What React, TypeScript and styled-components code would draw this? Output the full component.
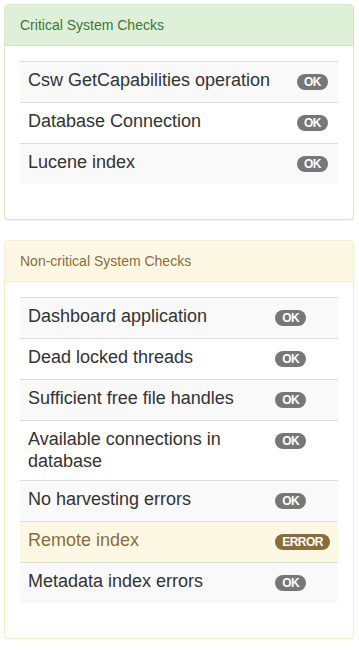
import React from "react";
import styled, { createGlobalStyle, css } from "styled-components";

const GlobalStyle = createGlobalStyle`
  html, body {
    margin: 0;
    padding: 0;
    background: #ffffff;
    font-family: "Liberation Sans", Arial, Helvetica, sans-serif;
    font-size: 14px;
    line-height: 20px;
    color: #333333;
  }
  * { box-sizing: border-box; }
`;

type Variant = "success" | "warning";

const variants = {
  success: { border: "#d6e9c6", bg: "#dff0d8", text: "#3c763d" },
  warning: { border: "#faebcc", bg: "#fcf8e3", text: "#8a6d3b" },
};

const Page = styled.div`
  padding: 4px 5px 0 4px;
  display: flex;
  flex-direction: column;
  gap: 20px;
`;

const Panel = styled.section<{ $variant: Variant }>`
  background: #ffffff;
  border: 1px solid ${(p) => variants[p.$variant].border};
  border-radius: 4px;
  box-shadow: 0 1px 1px rgba(0, 0, 0, 0.05);
`;

const PanelHeading = styled.div<{ $variant: Variant }>`
  padding: 10px 15px;
  background: ${(p) => variants[p.$variant].bg};
  color: ${(p) => variants[p.$variant].text};
  border-bottom: 1px solid ${(p) => variants[p.$variant].border};
  border-radius: 3px 3px 0 0;
  font-size: 14px;
  line-height: 20px;
`;

const PanelBody = styled.div`
  padding: 15px;
`;

const ChecksTable = styled.table`
  width: 100%;
  border-collapse: collapse;
  border-spacing: 0;
  margin-bottom: 20px;
`;

const Row = styled.tr<{ $error?: boolean }>`
  background: #ffffff;
  &:nth-of-type(odd) {
    background: #f9f9f9;
  }
  ${(p) =>
    p.$error &&
    css`
      &&& {
        background: #fcf8e3;
      }
      color: #8a6d3b;
    `}
`;

const NameCell = styled.td`
  padding: 8px;
  border-top: 1px solid #dddddd;
  vertical-align: top;
  font-size: 18px;
  line-height: 21.6px;
`;

const StatusCell = styled.td`
  padding: 8px;
  border-top: 1px solid #dddddd;
  vertical-align: top;
  font-size: 14px;
  line-height: 24px;
  white-space: nowrap;
`;

const Badge = styled.span<{ $error?: boolean }>`
  display: inline-block;
  vertical-align: top;
  margin-top: 4px;
  padding: 2px 7px;
  min-width: 10px;
  font-size: 12px;
  font-weight: bold;
  letter-spacing: -0.5px;
  line-height: 12px;
  color: #ffffff;
  text-align: center;
  white-space: nowrap;
  border-radius: 10px;
  background: ${(p) => (p.$error ? "#8a6d3b" : "#777777")};
`;

type Check = { name: string; ok: boolean };

const critical: Check[] = [
  { name: "Csw GetCapabilities operation", ok: true },
  { name: "Database Connection", ok: true },
  { name: "Lucene index", ok: true },
];

const nonCritical: Check[] = [
  { name: "Dashboard application", ok: true },
  { name: "Dead locked threads", ok: true },
  { name: "Sufficient free file handles", ok: true },
  { name: "Available connections in database", ok: true },
  { name: "No harvesting errors", ok: true },
  { name: "Remote index", ok: false },
  { name: "Metadata index errors", ok: true },
];

function CheckPanel({ title, variant, checks }: { title: string; variant: Variant; checks: Check[] }) {
  return (
    <Panel $variant={variant}>
      <PanelHeading $variant={variant}>{title}</PanelHeading>
      <PanelBody>
        <ChecksTable>
          <tbody>
            {checks.map((c) => (
              <Row key={c.name} $error={!c.ok}>
                <NameCell>{c.name}</NameCell>
                <StatusCell>
                  <Badge $error={!c.ok}>{c.ok ? "OK" : "ERROR"}</Badge>
                </StatusCell>
              </Row>
            ))}
          </tbody>
        </ChecksTable>
      </PanelBody>
    </Panel>
  );
}

export default function App() {
  return (
    <>
      <GlobalStyle />
      <Page>
        <CheckPanel title="Critical System Checks" variant="success" checks={critical} />
        <CheckPanel title="Non-critical System Checks" variant="warning" checks={nonCritical} />
      </Page>
    </>
  );
}
